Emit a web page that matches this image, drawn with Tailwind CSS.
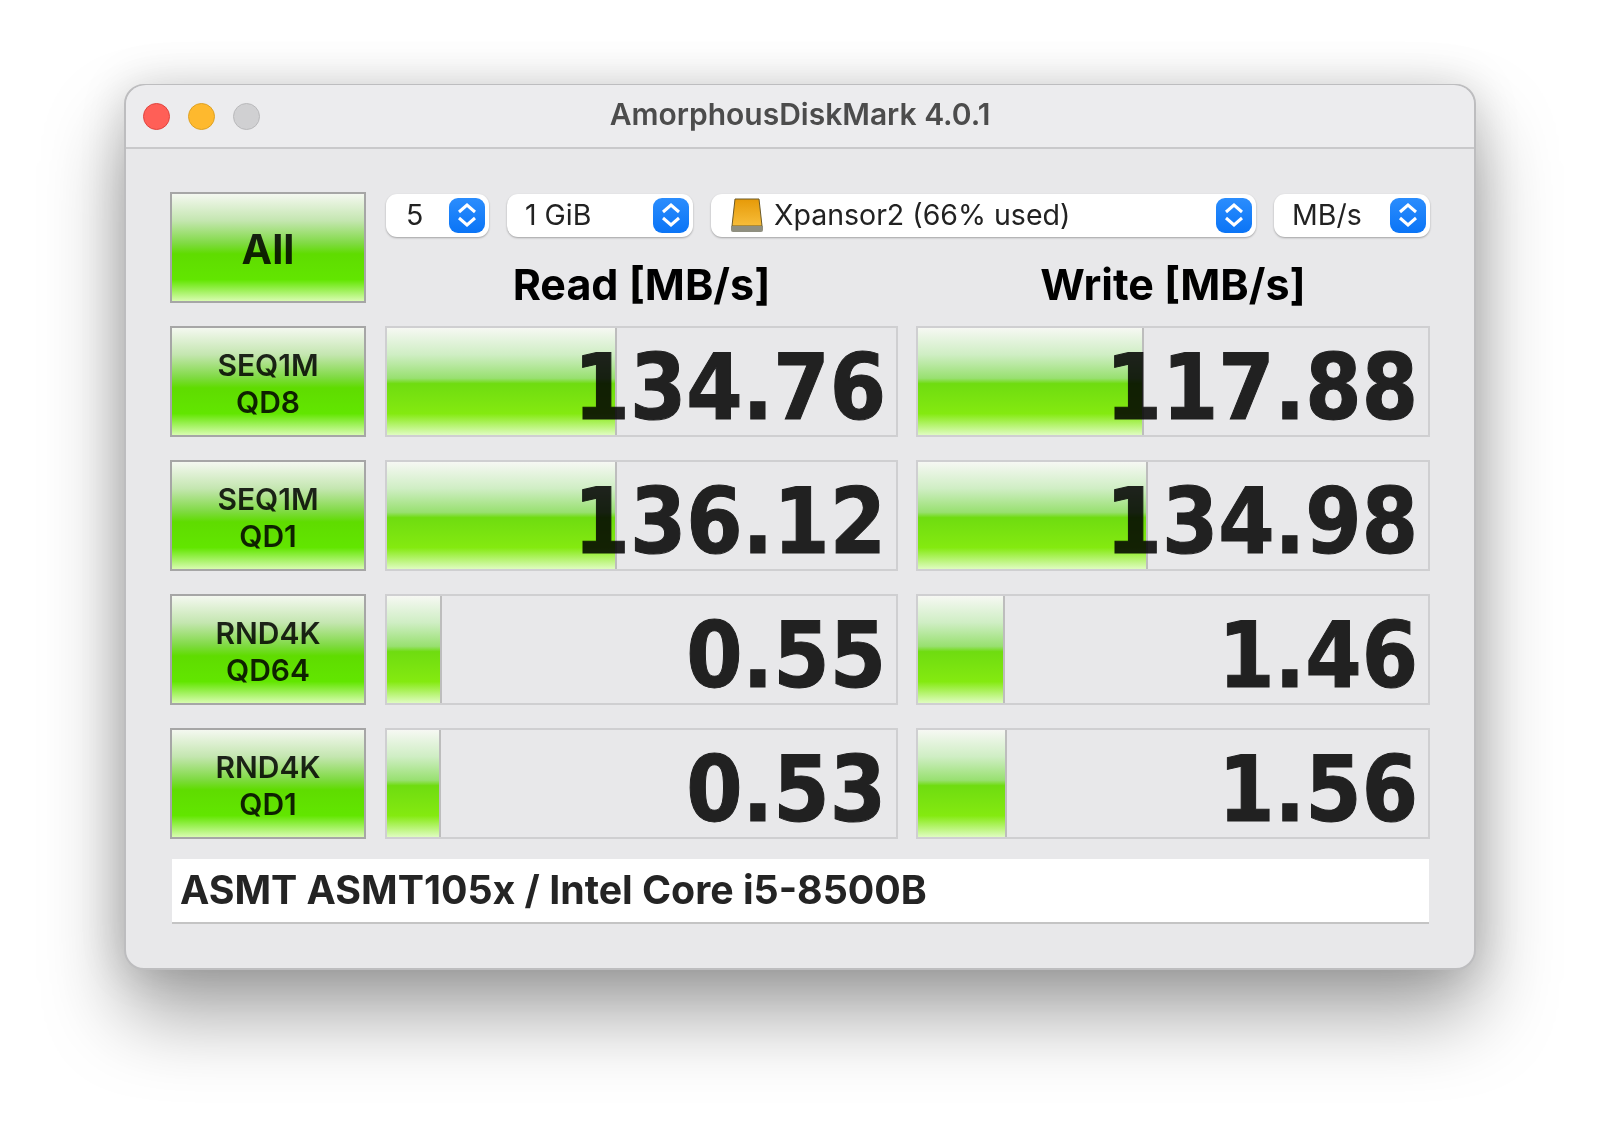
<!DOCTYPE html>
<html lang="en">
<head>
    <meta charset="UTF-8">
    <title>AmorphousDiskMark 4.0.1</title>
    <script src="https://cdn.jsdelivr.net/npm/@tailwindcss/browser@4"></script>
</head>
<body class="bg-white font-['Inter',sans-serif] w-[1600px] h-[1135px] overflow-hidden pl-[124px] pt-[84px]">

    <!-- Window -->
    <div class="w-[1352px] h-[886px] bg-[#e8e8ea] rounded-[20px] border-2 border-[#bdbdbf] shadow-[0_45px_80px_rgba(0,0,0,0.36),0_0_45px_rgba(0,0,0,0.15)]">

        <!-- Title bar -->
        <div class="relative h-[64px] -mt-px border-b-2 border-[#c9c9cb] flex items-center pl-[17px] gap-[18px] bg-[#ececee] rounded-t-[20px]">
            <span class="w-[27px] h-[27px] rounded-full bg-[#ff5f57] border border-[#e0443e]"></span>
            <span class="w-[27px] h-[27px] rounded-full bg-[#feb92e] border border-[#dea123]"></span>
            <span class="w-[27px] h-[27px] rounded-full bg-[#d0d0d2] border border-[#b9b9bb]"></span>
            <div class="absolute inset-0 flex items-center justify-center pb-1 text-[30px] font-semibold text-[#4c4c4c]">AmorphousDiskMark 4.0.1</div>
        </div>

        <div class="pl-[44px] pt-[43px]">
            <!-- Top row -->
            <div class="flex h-[111px] mb-[23px]">
                <button class="w-[196px] h-[111px] pt-1 mr-[19px] border-2 border-[#a6a6a6] bg-[linear-gradient(#f4f8f0_0%,#c4e6b0_25%,#80da44_46%,#5fdc00_56%,#62e600_80%,#d8fcb0_100%)] text-[41px] font-bold text-black/85">All</button>
                <div class="w-[1045px]">
                    <div class="flex gap-[18px] pl-px pt-0.5">
                        <div class="w-[103px] h-[43px] pl-5 pr-1 pb-px bg-white rounded-[11px] shadow-[0_1px_2px_rgba(0,0,0,0.3)] flex items-center justify-between text-[28.5px] text-[#222]">
                            <span>5</span>
                            <span class="w-9 h-[35px] rounded-[9px] bg-[linear-gradient(#2b8dfd,#0a74f6)] flex items-center justify-center">
                                <svg width="22" height="26" viewBox="0 0 22 26" fill="none" stroke="white" stroke-width="3"><path d="M3 10 L11 3 L19 10"/><path d="M3 16 L11 23 L19 16"/></svg>
                            </span>
                        </div>
                        <div class="w-[186px] h-[43px] pl-[18px] pr-1 pb-px bg-white rounded-[11px] shadow-[0_1px_2px_rgba(0,0,0,0.3)] flex items-center justify-between text-[28.5px] text-[#222]">
                            <span>1 GiB</span>
                            <span class="w-9 h-[35px] rounded-[9px] bg-[linear-gradient(#2b8dfd,#0a74f6)] flex items-center justify-center">
                                <svg width="22" height="26" viewBox="0 0 22 26" fill="none" stroke="white" stroke-width="3"><path d="M3 10 L11 3 L19 10"/><path d="M3 16 L11 23 L19 16"/></svg>
                            </span>
                        </div>
                        <div class="w-[545px] h-[43px] pl-[19px] pr-1 pb-px bg-white rounded-[11px] shadow-[0_1px_2px_rgba(0,0,0,0.3)] flex items-center text-[28.5px] text-[#222]">
                            <svg class="mr-[10px]" width="34" height="34" viewBox="0 0 34 34">
                                <defs><linearGradient id="disk" x1="0" y1="0" x2="0" y2="1"><stop offset="0" stop-color="#e69a08"/><stop offset="1" stop-color="#f7bd3a"/></linearGradient></defs>
                                <path d="M5 1 H29 L32 28 H2 Z" fill="url(#disk)" stroke="#6b5a2a" stroke-width="1"/>
                                <path d="M1 28 H33 V32 Q33 34 31 34 H3 Q1 34 1 32 Z" fill="#8f8f80"/>
                            </svg>
                            <span>Xpansor2 (66% used)</span>
                            <span class="ml-auto w-9 h-[35px] rounded-[9px] bg-[linear-gradient(#2b8dfd,#0a74f6)] flex items-center justify-center">
                                <svg width="22" height="26" viewBox="0 0 22 26" fill="none" stroke="white" stroke-width="3"><path d="M3 10 L11 3 L19 10"/><path d="M3 16 L11 23 L19 16"/></svg>
                            </span>
                        </div>
                        <div class="w-[156px] h-[43px] pl-[18px] pr-1 pb-px bg-white rounded-[11px] shadow-[0_1px_2px_rgba(0,0,0,0.3)] flex items-center justify-between text-[28.5px] text-[#222]">
                            <span>MB/s</span>
                            <span class="w-9 h-[35px] rounded-[9px] bg-[linear-gradient(#2b8dfd,#0a74f6)] flex items-center justify-center">
                                <svg width="22" height="26" viewBox="0 0 22 26" fill="none" stroke="white" stroke-width="3"><path d="M3 10 L11 3 L19 10"/><path d="M3 16 L11 23 L19 16"/></svg>
                            </span>
                        </div>
                    </div>
                    <div class="flex gap-[18px] mt-[21px] text-[43px] leading-[52px] font-bold text-black text-center">
                        <div class="w-[513px]">Read [MB/s]</div>
                        <div class="w-[514px]">Write [MB/s]</div>
                    </div>
                </div>
            </div>

            <!-- Row 1 -->
            <div class="flex h-[111px] mb-[23px]">
                <button class="w-[196px] pt-1 mr-[19px] border-2 border-[#a6a6a6] bg-[linear-gradient(#f4f8f0_0%,#c4e6b0_25%,#80da44_46%,#5fdc00_56%,#62e600_80%,#d8fcb0_100%)] text-[30px] leading-[37px] font-semibold text-black/85">SEQ1M<br>QD8</button>
                <div class="relative w-[513px] mr-[18px] border-2 border-[#cfcfd1] flex items-center justify-end pr-[10px] pt-3">
                    <div class="absolute left-0 inset-y-0 border-r-2 border-[#bdbdbd] bg-[linear-gradient(#f6f8f3_0%,#cfeec4_25%,#98e070_47%,#6fdc10_52%,#84ea10_80%,#dffcc0_100%)]" style="width: 230px"></div>
                    <span class="relative font-['DejaVu_Sans',sans-serif] font-stretch-condensed font-bold text-[90px] text-[#242424] mix-blend-multiply [-webkit-text-stroke:1px_#242424]">134.76</span>
                </div>
                <div class="relative w-[514px] border-2 border-[#cfcfd1] flex items-center justify-end pr-[10px] pt-3">
                    <div class="absolute left-0 inset-y-0 border-r-2 border-[#bdbdbd] bg-[linear-gradient(#f6f8f3_0%,#cfeec4_25%,#98e070_47%,#6fdc10_52%,#84ea10_80%,#dffcc0_100%)]" style="width: 226px"></div>
                    <span class="relative font-['DejaVu_Sans',sans-serif] font-stretch-condensed font-bold text-[90px] text-[#242424] mix-blend-multiply [-webkit-text-stroke:1px_#242424]">117.88</span>
                </div>
            </div>

            <!-- Row 2 -->
            <div class="flex h-[111px] mb-[23px]">
                <button class="w-[196px] pt-1 mr-[19px] border-2 border-[#a6a6a6] bg-[linear-gradient(#f4f8f0_0%,#c4e6b0_25%,#80da44_46%,#5fdc00_56%,#62e600_80%,#d8fcb0_100%)] text-[30px] leading-[37px] font-semibold text-black/85">SEQ1M<br>QD1</button>
                <div class="relative w-[513px] mr-[18px] border-2 border-[#cfcfd1] flex items-center justify-end pr-[10px] pt-3">
                    <div class="absolute left-0 inset-y-0 border-r-2 border-[#bdbdbd] bg-[linear-gradient(#f6f8f3_0%,#cfeec4_25%,#98e070_47%,#6fdc10_52%,#84ea10_80%,#dffcc0_100%)]" style="width: 230px"></div>
                    <span class="relative font-['DejaVu_Sans',sans-serif] font-stretch-condensed font-bold text-[90px] text-[#242424] mix-blend-multiply [-webkit-text-stroke:1px_#242424]">136.12</span>
                </div>
                <div class="relative w-[514px] border-2 border-[#cfcfd1] flex items-center justify-end pr-[10px] pt-3">
                    <div class="absolute left-0 inset-y-0 border-r-2 border-[#bdbdbd] bg-[linear-gradient(#f6f8f3_0%,#cfeec4_25%,#98e070_47%,#6fdc10_52%,#84ea10_80%,#dffcc0_100%)]" style="width: 230px"></div>
                    <span class="relative font-['DejaVu_Sans',sans-serif] font-stretch-condensed font-bold text-[90px] text-[#242424] mix-blend-multiply [-webkit-text-stroke:1px_#242424]">134.98</span>
                </div>
            </div>

            <!-- Row 3 -->
            <div class="flex h-[111px] mb-[23px]">
                <button class="w-[196px] pt-1 mr-[19px] border-2 border-[#a6a6a6] bg-[linear-gradient(#f4f8f0_0%,#c4e6b0_25%,#80da44_46%,#5fdc00_56%,#62e600_80%,#d8fcb0_100%)] text-[30px] leading-[37px] font-semibold text-black/85">RND4K<br>QD64</button>
                <div class="relative w-[513px] mr-[18px] border-2 border-[#cfcfd1] flex items-center justify-end pr-[10px] pt-3">
                    <div class="absolute left-0 inset-y-0 border-r-2 border-[#bdbdbd] bg-[linear-gradient(#f6f8f3_0%,#cfeec4_25%,#98e070_47%,#6fdc10_52%,#84ea10_80%,#dffcc0_100%)]" style="width: 55px"></div>
                    <span class="relative font-['DejaVu_Sans',sans-serif] font-stretch-condensed font-bold text-[90px] text-[#242424] mix-blend-multiply [-webkit-text-stroke:1px_#242424]">0.55</span>
                </div>
                <div class="relative w-[514px] border-2 border-[#cfcfd1] flex items-center justify-end pr-[10px] pt-3">
                    <div class="absolute left-0 inset-y-0 border-r-2 border-[#bdbdbd] bg-[linear-gradient(#f6f8f3_0%,#cfeec4_25%,#98e070_47%,#6fdc10_52%,#84ea10_80%,#dffcc0_100%)]" style="width: 87px"></div>
                    <span class="relative font-['DejaVu_Sans',sans-serif] font-stretch-condensed font-bold text-[90px] text-[#242424] mix-blend-multiply [-webkit-text-stroke:1px_#242424]">1.46</span>
                </div>
            </div>

            <!-- Row 4 -->
            <div class="flex h-[111px] mb-[20px]">
                <button class="w-[196px] pt-1 mr-[19px] border-2 border-[#a6a6a6] bg-[linear-gradient(#f4f8f0_0%,#c4e6b0_25%,#80da44_46%,#5fdc00_56%,#62e600_80%,#d8fcb0_100%)] text-[30px] leading-[37px] font-semibold text-black/85">RND4K<br>QD1</button>
                <div class="relative w-[513px] mr-[18px] border-2 border-[#cfcfd1] flex items-center justify-end pr-[10px] pt-3">
                    <div class="absolute left-0 inset-y-0 border-r-2 border-[#bdbdbd] bg-[linear-gradient(#f6f8f3_0%,#cfeec4_25%,#98e070_47%,#6fdc10_52%,#84ea10_80%,#dffcc0_100%)]" style="width: 54px"></div>
                    <span class="relative font-['DejaVu_Sans',sans-serif] font-stretch-condensed font-bold text-[90px] text-[#242424] mix-blend-multiply [-webkit-text-stroke:1px_#242424]">0.53</span>
                </div>
                <div class="relative w-[514px] border-2 border-[#cfcfd1] flex items-center justify-end pr-[10px] pt-3">
                    <div class="absolute left-0 inset-y-0 border-r-2 border-[#bdbdbd] bg-[linear-gradient(#f6f8f3_0%,#cfeec4_25%,#98e070_47%,#6fdc10_52%,#84ea10_80%,#dffcc0_100%)]" style="width: 89px"></div>
                    <span class="relative font-['DejaVu_Sans',sans-serif] font-stretch-condensed font-bold text-[90px] text-[#242424] mix-blend-multiply [-webkit-text-stroke:1px_#242424]">1.56</span>
                </div>
            </div>

            <!-- Drive info -->
            <div class="ml-0.5 w-[1257px] h-[65px] bg-white border-b-2 border-[#c4c4c4] pl-2 flex items-center text-[39.3px] font-bold text-[#242424]">ASMT ASMT105x / Intel Core i5-8500B</div>
        </div>
    </div>
</body>
</html>
